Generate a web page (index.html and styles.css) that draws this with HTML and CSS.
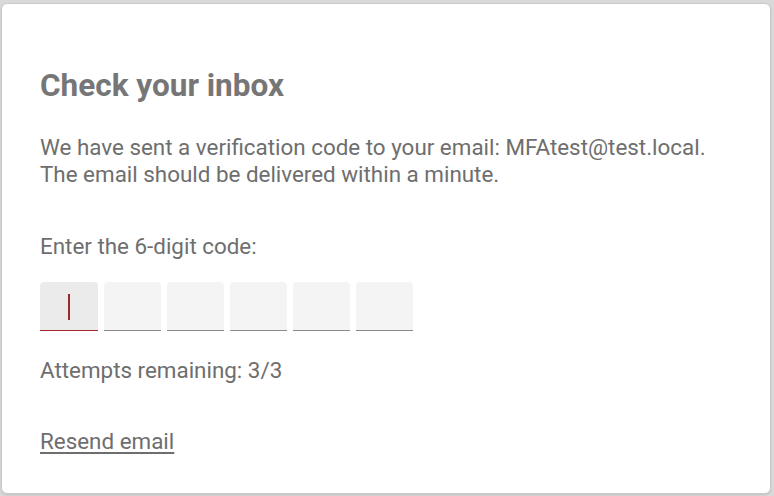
FILE: index.html
```html
<!DOCTYPE html>
<html lang="en">
<head>
<meta charset="utf-8">
<title>Check your inbox</title>
<link rel="stylesheet" href="styles.css">
</head>
<body>
<div class="backdrop">
  <div class="modal">
    <h1 class="title">Check your inbox</h1>
    <p class="desc">We have sent a verification code to your email: MFAtest@test.local.<br>The email should be delivered within a minute.</p>
    <p class="label">Enter the 6-digit code:</p>
    <div class="code">
      <div class="digit active"><span class="caret"></span></div>
      <div class="digit"></div>
      <div class="digit"></div>
      <div class="digit"></div>
      <div class="digit"></div>
      <div class="digit"></div>
    </div>
    <p class="attempts">Attempts remaining: 3/3</p>
    <a class="resend" href="#">Resend email</a>
  </div>
</div>
</body>
</html>
```
FILE: styles.css
```css
html, body {
  margin: 0;
  padding: 0;
  background: #d9d9d9;
  font-family: Roboto, "Liberation Sans", sans-serif;
}
.backdrop {
  width: 774px;
  height: 496px;
  padding: 3px 0 0 1px;
  box-sizing: border-box;
}
.modal {
  width: 770px;
  height: 491px;
  box-sizing: border-box;
  background: #fff;
  border: 1px solid #c9c9c9;
  border-radius: 6px;
  box-shadow: 0 1px 2px rgba(0,0,0,0.12);
  padding: 64px 38px 0 38px;
  display: flex;
  flex-direction: column;
  align-items: flex-start;
}
.title {
  margin: 0;
  font-size: 31.5px;
  line-height: 36px;
  font-weight: 700;
  color: #767676;
}
.desc, .label, .attempts {
  margin: 0;
  font-size: 22.4px;
  line-height: 27px;
  color: #6e6e6e;
}
.desc { margin-top: 30px; }
.label { margin-top: 45px; }
.code {
  margin-top: 22px;
  display: flex;
  gap: 6px;
}
.digit {
  width: 57px;
  height: 48px;
  background: #f4f4f4;
  border-bottom: 1px solid #8a8a8a;
  border-radius: 4px 4px 0 0;
  display: flex;
  align-items: center;
  justify-content: center;
}
.digit.active {
  width: 58px;
  background: #ebebeb;
  border-bottom-color: #a3282b;
}
.caret {
  width: 2px;
  height: 26px;
  background: #9a2a2a;
  margin-top: 2px;
}
.attempts { margin-top: 26px; }
.resend {
  margin-top: 44px;
  font-size: 22.4px;
  line-height: 27px;
  color: #6e6e6e;
  text-decoration: underline;
  text-underline-offset: 3px;
}
```
